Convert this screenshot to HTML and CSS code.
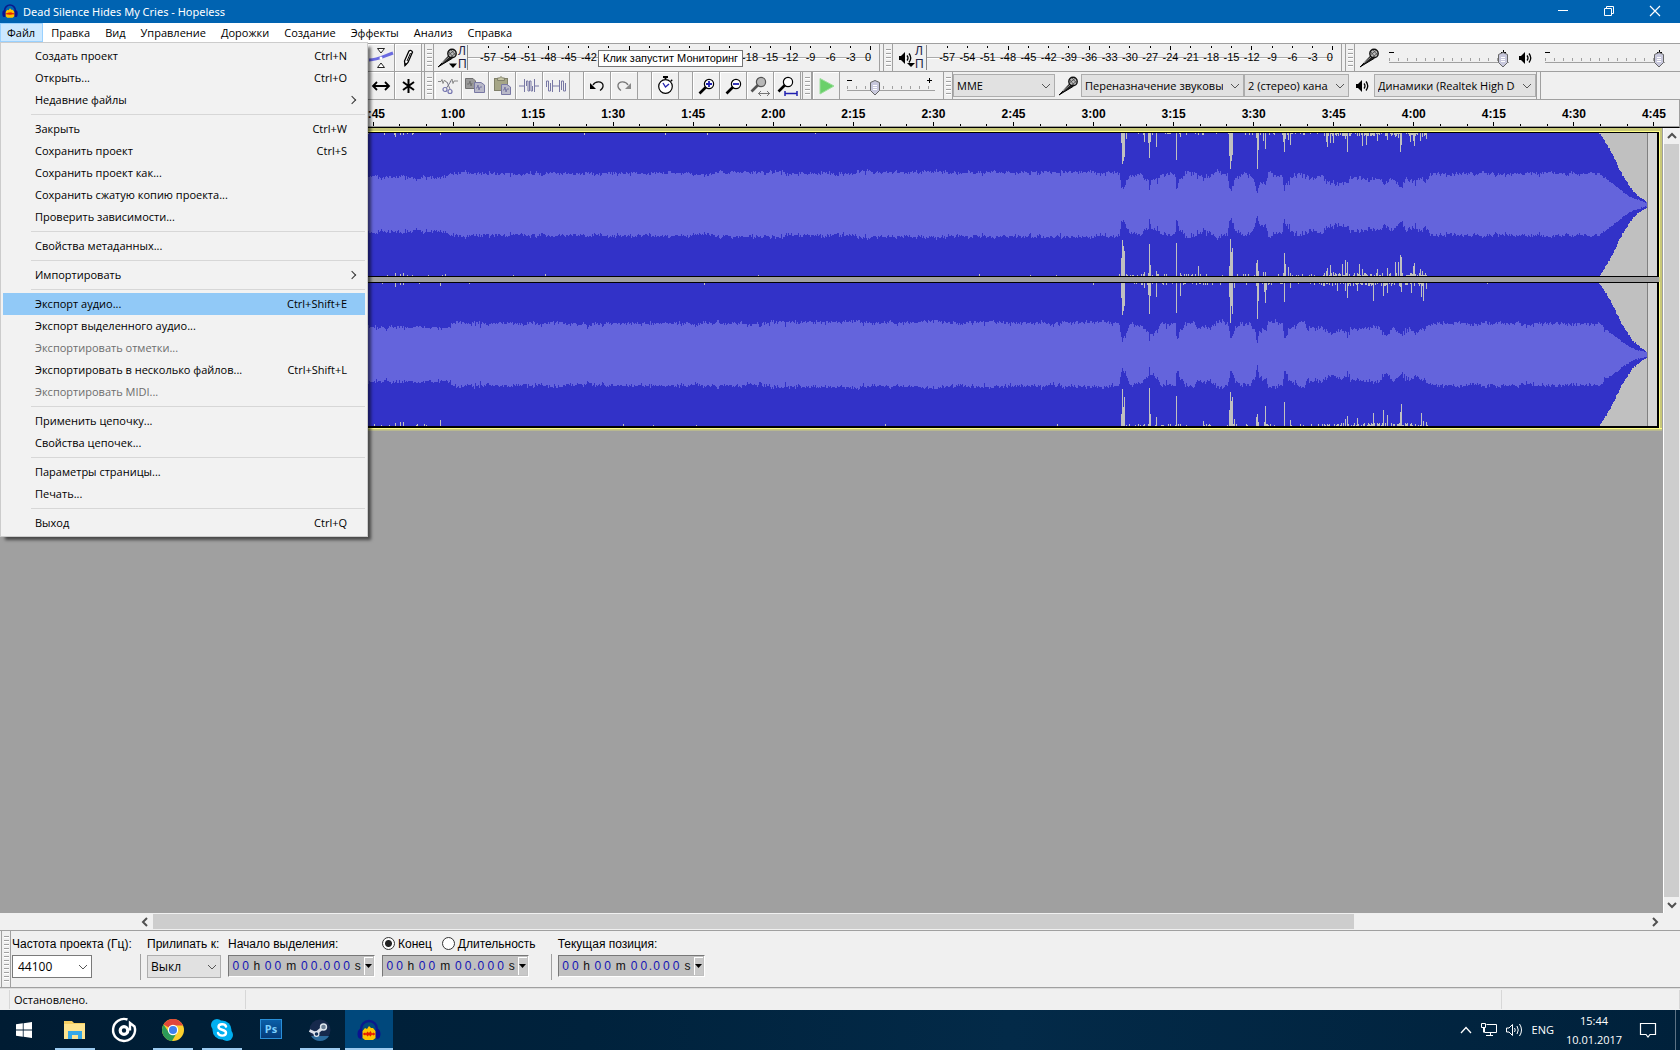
FILE: index.html
```html
<!DOCTYPE html>
<html lang="ru">
<head>
<meta charset="utf-8">
<title>Dead Silence Hides My Cries - Hopeless</title>
<link rel="stylesheet" href="styles.css">
</head>
<body>
<svg class="defs" width="0" height="0" aria-hidden="true">
  <defs>
    <symbol id="mic" viewBox="0 0 20 20">
      <path d="M1 19 L3 17 L12 7.500 L15 10.500 L5 16.500 Z" fill="#222" stroke="#000"/>
      <path d="M5 15 L12 9" stroke="#999"/>
      <circle cx="15" cy="5.500" r="4.200" fill="#bbb" stroke="#111" stroke-width="1.400"/>
      <path d="M12 4 L16 9 M14 2 L18.500 7 M12 6.500 L17 2.500 M14 9 L18.500 5" stroke="#444" stroke-width=".8"/>
    </symbol>
    <symbol id="speaker" viewBox="0 0 14 14">
      <path d="M0 5 H2 L6 1 V13 L2 9 H0 Z" fill="#000"/>
      <path d="M8 4.500 Q10 7 8 9.500 M10 2.500 Q13.500 7 10 11.500" fill="none" stroke="#000" stroke-width="1.300"/>
    </symbol>
    <symbol id="lens" viewBox="0 0 18 18">
      <path d="M8 9 L1.500 15.500" stroke="#000" stroke-width="2.600"/>
      <circle cx="11" cy="6" r="4.600" stroke="#000" stroke-width="1.200"/>
    </symbol>
    <symbol id="phones" viewBox="0 0 24 24">
      <path d="M4 14 V11 A8 8 0 0 1 20 11 V14" fill="none" stroke="#0a1a8c" stroke-width="2.400"/>
      <ellipse cx="3.500" cy="16" rx="3" ry="5" fill="#0b1290"/>
      <ellipse cx="20.500" cy="16" rx="3" ry="5" fill="#0b1290"/>
      <path d="M5.500 20 V13 L8 10 L10 11 L12 8 L14 10 L16 10 L18.500 13 V20 L16 22 H8 Z" fill="#fdc500"/>
      <path d="M5.500 16 L8 14.500 L9 15.500 L10.500 13.500 L12 15 L13.500 13 L15 15.500 L16.500 14.500 L18.500 16 L16.500 17.500 L15 16.500 L13.500 18.500 L12 17 L10.500 18.500 L9 16.500 L8 17.500 Z" fill="#e81c00"/>
    </symbol>
  </defs>
</svg>

<header class="titlebar">
  <svg class="app-icon" width="16" height="16"><use href="#phones"/></svg>
  <h1>Dead Silence Hides My Cries - Hopeless</h1>
  <button aria-label="Свернуть"><svg width="12" height="12"><path d="M1 5.500 H11" stroke="#fff"/></svg></button>
  <button aria-label="Восстановить"><svg width="12" height="12"><path d="M1.500 3.500 H8.500 V10.500 H1.500 Z M3.500 3.500 V1.500 H10.500 V8.500 H8.500" fill="none" stroke="#fff"/></svg></button>
  <button aria-label="Закрыть"><svg width="12" height="12"><path d="M1 1 L11 11 M11 1 L1 11" stroke="#fff" stroke-width="1.200"/></svg></button>
</header>

<nav class="menubar">
  <div class="menu-root">
    <button class="open">Файл</button>
    <div class="popup">
      <button>Создать проект<kbd>Ctrl+N</kbd></button>
      <button>Открыть...<kbd>Ctrl+O</kbd></button>
      <button class="sub">Недавние файлы</button>
      <hr>
      <button>Закрыть<kbd>Ctrl+W</kbd></button>
      <button>Сохранить проект<kbd>Ctrl+S</kbd></button>
      <button>Сохранить проект как...</button>
      <button>Сохранить сжатую копию проекта...</button>
      <button>Проверить зависимости...</button>
      <hr>
      <button>Свойства метаданных...</button>
      <hr>
      <button class="sub">Импортировать</button>
      <hr>
      <button class="current">Экспорт аудио...<kbd>Ctrl+Shift+E</kbd></button>
      <button>Экспорт выделенного аудио...</button>
      <button disabled>Экспортировать отметки...</button>
      <button>Экспортировать в несколько файлов...<kbd>Ctrl+Shift+L</kbd></button>
      <button disabled>Экспортировать MIDI...</button>
      <hr>
      <button>Применить цепочку...</button>
      <button>Свойства цепочек...</button>
      <hr>
      <button>Параметры страницы...</button>
      <button>Печать...</button>
      <hr>
      <button>Выход<kbd>Ctrl+Q</kbd></button>
    </div>
  </div>
  <button>Правка</button>
  <button>Вид</button>
  <button>Управление</button>
  <button>Дорожки</button>
  <button>Создание</button>
  <button>Эффекты</button>
  <button>Анализ</button>
  <button>Справка</button>
</nav>

<section class="toolbars">
  <div class="toolrow">
    <div class="tools">
      <button class="tool" aria-label="Огибающая"><svg width="24" height="24"><path d="M0 14 C9 14 13 11 24 7" fill="none" stroke="#6a6ae0" stroke-width="3"/><path d="M8.500 2.500 H15.500 L12 7 Z M8.500 21.500 H15.500 L12 17 Z" fill="#fff" stroke="#222"/><circle cx="12" cy="12" r="1.500" fill="#fff"/></svg></button>
      <button class="tool" aria-label="Рисование"><svg width="24" height="24"><path d="M9 19.500 L8.500 15 L13 5 Q15 3.500 16.500 6 L12 16.500 Z" fill="#fff" stroke="#000" stroke-width="1.300"/><path d="M11 15 L14.500 7" stroke="#000"/><path d="M8.500 20 L9 17 L11 18 Z"/></svg></button>
    </div>
    <i class="grip"></i>
    <div class="meterbar">
      <svg class="meter-icon" width="20" height="20"><use href="#mic"/><path d="M12 15.500 H20 L16 20 Z"/></svg>
      <span class="channels">Л<br>П</span>
      <div class="meter"><ol class="scale" data-covered-from="-39" data-covered-to="-21"></ol><div class="tooltip" role="tooltip">Клик запустит Мониторинг</div></div>
    </div>
    <i class="grip"></i>
    <div class="meterbar play-meter">
      <svg class="meter-icon" width="14" height="14"><use href="#speaker"/><path d="M8 12 H16 L12 16 Z"/></svg>
      <span class="channels">Л<br>П</span>
      <div class="meter"><ol class="scale"></ol></div>
    </div>
    <i class="grip"></i>
    <div class="mixer">
      <svg width="20" height="20"><use href="#mic"/></svg>
      <label class="slider full"><input type="range" value="100" aria-label="Уровень записи"></label>
      <svg width="14" height="14"><use href="#speaker"/></svg>
      <label class="slider full"><input type="range" value="100" aria-label="Уровень воспроизведения"></label>
    </div>
  </div>
  <div class="toolrow">
    <div class="tools">
      <button class="tool" aria-label="Сдвиг"><svg width="24" height="24"><path d="M4 12 H20 M8 8 L4 12 L8 16 M16 8 L20 12 L16 16" fill="none" stroke="#000" stroke-width="1.800"/></svg></button>
      <button class="tool" aria-label="Мультиинструмент"><svg width="24" height="24"><path d="M12.500 5 V19 M7 8 L18 16 M18 8 L7 16" stroke="#000" stroke-width="2"/></svg></button>
    </div>
    <i class="grip"></i>
    <div class="edits">
      <button class="tool" aria-label="Вырезать"><svg width="24" height="24"><path d="M2 7.500 H5 L6 5.500 L7 9.500 L8.500 6 L10 8 H11 M14 8 L16 5 L17 9.500 L18 7 H22" fill="none" stroke="#888"/><path d="M15 7 L10.500 14 M11 8 L14 15" stroke="#778"/><circle cx="9" cy="15.500" r="2" fill="none" stroke="#7676b0" stroke-width="1.200"/><circle cx="14" cy="17.500" r="2" fill="none" stroke="#7676b0" stroke-width="1.200"/></svg></button>
      <button class="tool" aria-label="Копировать"><svg width="24" height="24"><path d="M2.500 4.500 H10 L12.500 7 V14.500 H2.500 Z" fill="#999" stroke="#707070"/><path d="M4 10 H6 L7 7 L8 12 L9 9" fill="none" stroke="#707070"/><path d="M11.500 8.500 H18 L21.500 11 V18.500 H11.500 Z" fill="#b8b8c8" stroke="#7878a4"/><path d="M13 14 H14 L15 11 L16 16 L17 13 H19" fill="none" stroke="#7878a4"/></svg></button>
      <button class="tool" aria-label="Вставить"><svg width="24" height="24"><rect x="4.500" y="4.500" width="13" height="12" fill="#a5a587" stroke="#80806a"/><path d="M7.500 6.500 V4 H9.500 Q11 1 12.500 4 H14.500 V6.500 Z" fill="#c5c5a5" stroke="#80806a"/><path d="M11.500 10.500 H17 L20.500 13 V20.500 H11.500 Z" fill="#b8b8c8" stroke="#7878a4"/><path d="M13 16 H14 L15 13 L16 18 L17 15 H19" fill="none" stroke="#7878a4"/></svg></button>
      <button class="tool" aria-label="Обрезать"><svg width="24" height="24"><path d="M2 12 H7 M18 12 H22 M7.500 5 V18 M17.500 5 V18 M9.500 12 V7 H11 V17 H12.500 V7 H14 V17 H15.500 V12" fill="none" stroke="#7878a4"/></svg></button>
      <button class="tool" aria-label="Тишина"><svg width="24" height="24"><path d="M2.500 13 V7 H4.500 V17 H6.500 V9 M8.500 6 V18 M8.500 12 H15 M15.500 6 V18 M17.500 16 V7 H19.500 V17 H21.500 V9" fill="none" stroke="#7878a4"/></svg></button>
      <button class="tool apart" aria-label="Отменить"><svg width="24" height="24"><path d="M8 11 C10 7 17 6.500 18 11 Q18.500 14 15 16.500" fill="none" stroke="#111" stroke-width="1.300"/><path d="M5 9 V15 H11 Z"/></svg></button>
      <button class="tool" aria-label="Вернуть"><svg width="24" height="24"><path d="M16 11 C14 7 7 6.500 6 11 Q5.500 14 9 16.500" fill="none" stroke="#777" stroke-width="1.300"/><path d="M19 9 V15 H13 Z" fill="#888"/></svg></button>
      <button class="tool apart" aria-label="Синхронизация"><svg width="24" height="24"><path d="M10 3 H15 M12.500 2 V5" stroke="#000" stroke-width="1.800"/><circle cx="12.500" cy="12.500" r="6.800" fill="#fff" stroke="#000" stroke-width="1.200"/><path d="M10 9 L12.500 13 L16 10" fill="none" stroke="#2525b0" stroke-width="1.400"/><path d="M18 6 L19 7" stroke="#000" stroke-width="2"/></svg></button>
      <button class="tool apart" aria-label="Приблизить"><svg width="24" height="24"><use href="#lens" x="4" y="4" width="18" height="18" fill="#fff"/><path d="M12 10 H18 M15 7 V13" stroke="#2020b0" stroke-width="1.800"/></svg></button>
      <button class="tool" aria-label="Отдалить"><svg width="24" height="24"><use href="#lens" x="4" y="4" width="18" height="18" fill="#fff"/><path d="M12 10 H18" stroke="#2020b0" stroke-width="1.800"/></svg></button>
      <button class="tool" aria-label="Выделение в окно"><svg width="24" height="24"><use href="#lens" x="2" y="2" width="18" height="18" fill="#999" opacity=".65"/><path d="M10 19.500 H22 M13 17 L10.500 19.500 L13 22 M19 17 L21.500 19.500 L19 22" fill="none" stroke="#777"/></svg></button>
      <button class="tool" aria-label="Проект в окно"><svg width="24" height="24"><use href="#lens" x="2" y="2" width="18" height="18" fill="#fff"/><path d="M10 19.500 H22 M10 17 V22 M22 17 V22" stroke="#2020b0" stroke-width="1.500"/></svg></button>
    </div>
    <i class="grip"></i>
    <div class="speed">
      <button class="tool" aria-label="Воспроизвести"><svg width="24" height="24"><path d="M6 4.500 L20 12 L6 20 Z" fill="#6ad06a" stroke="#9ade9a"/></svg></button>
      <label class="slider"><input type="range" value="29" aria-label="Скорость"></label>
    </div>
    <i class="grip"></i>
    <div class="devices">
      <select class="host" aria-label="Аудиосистема"><option>MME</option></select>
      <svg width="20" height="20"><use href="#mic"/></svg>
      <select class="input-device" aria-label="Устройство записи"><option>Переназначение звуковых устр.</option></select>
      <select class="input-channels" aria-label="Каналы записи"><option>2 (стерео) каналы записи</option></select>
      <svg class="out" width="14" height="14"><use href="#speaker"/></svg>
      <select class="output-device" aria-label="Устройство воспроизведения"><option>Динамики (Realtek High Definition)</option></select>
    </div>
  </div>
</section>

<div class="ruler"><ol id="timeline"></ol></div>

<main class="workspace">
  <div class="tracks">
    <div class="track">
      <svg class="wave" viewBox="0 0 1657 143" preserveAspectRatio="none"></svg>
      <svg class="wave" viewBox="0 0 1657 143" preserveAspectRatio="none"></svg>
    </div>
  </div>
  <div class="vscroll">
    <button aria-label="Вверх"><svg width="10" height="8"><path d="M1 6 L5 2 L9 6" fill="none" stroke="#505050" stroke-width="2"/></svg></button>
    <i></i>
    <button aria-label="Вниз"><svg width="10" height="8"><path d="M1 2 L5 6 L9 2" fill="none" stroke="#505050" stroke-width="2"/></svg></button>
  </div>
</main>
<div class="hscroll">
  <button aria-label="Влево"><svg width="8" height="10"><path d="M6 1 L2 5 L6 9" fill="none" stroke="#505050" stroke-width="2"/></svg></button>
  <div class="rail"><i></i></div>
  <button aria-label="Вправо"><svg width="8" height="10"><path d="M2 1 L6 5 L2 9" fill="none" stroke="#505050" stroke-width="2"/></svg></button>
</div>

<section class="selection">
  <i class="grip"></i>
  <div class="field rate">
    <label for="rate">Частота проекта (Гц):</label>
    <div class="combo"><input id="rate" value="44100"><button aria-label="Список частот"><svg width="10" height="6"><path d="M1 1 L5 5 L9 1" fill="none" stroke="#555"/></svg></button></div>
  </div>
  <div class="field snap">
    <label for="snap">Прилипать к:</label>
    <select id="snap"><option>Выкл</option></select>
  </div>
  <div class="field">
    <span>Начало выделения:</span>
    <div class="time"></div>
  </div>
  <div class="field">
    <div class="radios">
      <label><input type="radio" name="end" checked>Конец</label>
      <label><input type="radio" name="end">Длительность</label>
    </div>
    <div class="time"></div>
  </div>
  <div class="field position">
    <span>Текущая позиция:</span>
    <div class="time"></div>
  </div>
</section>

<footer class="status"><span>Остановлено.</span><span></span><span></span></footer>

<nav class="taskbar">
  <button class="start" aria-label="Пуск"><svg width="16" height="16"><path d="M0 2.300 L6.800 1.300 V7.500 H0 Z M7.600 1.200 L16 0 V7.500 H7.600 Z M0 8.400 H6.800 V14.700 L0 13.700 Z M7.600 8.400 H16 V16 L7.600 14.800 Z" fill="#fff"/></svg></button>
  <button class="run" aria-label="Проводник"><svg width="24" height="24"><path d="M1 3 H9 L11 5 H22 V21 H1 Z" fill="#f5cf62"/><path d="M1 6 H22 V21 H1 Z" fill="#fde48f"/><path d="M5 21 V13 H19 V21 H15 V17 H9 V21 Z" fill="#35a8e8"/></svg></button>
  <button aria-label="Музыка"><svg width="24" height="24"><path d="M15.500 1.500 A11 11 0 1 0 22.500 8.500 L18 5 V12.500" fill="none" stroke="#fff" stroke-width="2.400"/><circle cx="12" cy="12.500" r="3.800" fill="none" stroke="#fff" stroke-width="3.200"/></svg></button>
  <button class="run" aria-label="Chrome"><svg width="24" height="24"><circle cx="12" cy="12" r="11" fill="#fbcf2d"/><path d="M12 12 L2.500 6.500 A11 11 0 0 1 21.500 6.500 L22 7.500 H12 Z" fill="#e0463a"/><path d="M2.500 6.500 A11 11 0 0 0 11 23 L16 14.500 L12 12 L8 14.500 Z" fill="#2c9b58"/><circle cx="12" cy="12" r="5.200" fill="#fff"/><circle cx="12" cy="12" r="4" fill="#3f80ee"/></svg></button>
  <button class="run" aria-label="Skype"><svg width="24" height="24"><circle cx="12" cy="12" r="9.500" fill="#00aff0"/><circle cx="7" cy="7" r="6" fill="#00aff0"/><circle cx="17" cy="17" r="6" fill="#00aff0"/><path d="M16 8.500 C15 5.500 8.500 5.500 8.500 9 C8.500 12.500 16 11 16 14.800 C16 18.500 9 18.500 8 15" fill="none" stroke="#fff" stroke-width="2.400" stroke-linecap="round"/></svg></button>
  <button aria-label="Photoshop"><span class="ps">Ps</span></button>
  <button class="run" aria-label="Steam"><svg width="24" height="24"><circle cx="12" cy="12" r="10.500" fill="#16294c"/><path d="M3 18 A10.500 10.500 0 0 0 21 18 Z" fill="#2b6a9c"/><path d="M1.500 12.500 L8 15.500 L15 9.500" fill="none" stroke="#d8dee8" stroke-width="3"/><circle cx="8.500" cy="16" r="2.400" fill="#16345c" stroke="#e0e6ee" stroke-width="1.200"/><circle cx="15.500" cy="9" r="3" fill="#6d7f96" stroke="#e0e6ee" stroke-width="1.400"/></svg></button>
  <button class="run active" aria-label="Audacity"><svg width="24" height="24"><use href="#phones"/></svg></button>
  <div class="tray">
    <svg width="12" height="8"><path d="M1 7 L6 1.500 L11 7" fill="none" stroke="#fff" stroke-width="1.300"/></svg>
    <svg width="16" height="14"><path d="M5.500 1.500 H15.500 V9.500 H3.500 V5 M9.500 10 V12.500 M5 12.500 H12 M.5 .5 H4.500 V4.500 H.5 Z M2.500 4.500 V9.500" fill="none" stroke="#fff"/></svg>
    <svg width="17" height="14"><path d="M.5 5 H3 L6.500 1.500 V12.500 L3 9 H.5 Z M8.500 5 Q10 7 8.500 9 M11 3 Q13.500 7 11 11 M13.500 1 Q17.500 7 13.500 13" fill="none" stroke="#fff"/></svg>
    <span>ENG</span>
    <time>15:44<br>10.01.2017</time>
    <svg width="16" height="16"><path d="M.5 1.500 H15.500 V12.500 H10 V12.500 L8 15 L6 12.500 H.5 Z" fill="none" stroke="#fff" stroke-width="1.200"/></svg>
  </div>
</nav>
<script src="app.js"></script>
</body>
</html>
```
FILE: styles.css
```css
* { box-sizing: border-box; }

body {
  margin: 0;
  height: 100vh;
  display: flex;
  flex-direction: column;
  background: #f0f0f0;
  color: #000;
  font: 11px/16px "Open Sans", "Noto Sans", sans-serif;
  overflow: hidden;
}

button, select, input { font: inherit; color: inherit; margin: 0; }
button { border: 0; padding: 0; background: none; }
svg { display: block; flex: none; overflow: visible; }
ol { list-style: none; margin: 0; padding: 0; }
.defs { position: absolute; }

/* title bar */
.titlebar {
  display: flex;
  align-items: center;
  height: 23px;
  flex: none;
  padding: 0 3px 2px 2px;
  background: #0063b1;
  color: #fff;
}
.titlebar h1 { flex: 1; margin: 0 0 0 5px; padding-top: 2px; font: 11px/16px "Noto Sans", sans-serif; }
.titlebar button { width: 46px; height: 20px; display: grid; place-items: center; }
.titlebar button:last-child { width: 45px; }

/* menu */
.menubar { display: flex; gap: 1px; flex: none; height: 20px; background: #fff; }
.menubar > button, .menu-root > button { height: 19px; padding: 0 7px; }
.menu-root { position: relative; }
.menu-root > .open { padding: 0 8px 0 7px; background: #cce8ff; outline: 1px solid #99d1ff; outline-offset: -1px; }
.popup {
  position: absolute;
  z-index: 5;
  left: 0;
  top: 19px;
  width: 368px;
  padding: 2px;
  border: 1px solid #ccc;
  background: #f2f2f2;
  box-shadow: 4px 4px 3px -1px rgba(0, 0, 0, .55);
}
.popup button {
  display: flex;
  align-items: center;
  width: 100%;
  height: 22px;
  padding: 0 18px 0 32px;
  text-align: left;
}
.popup kbd { margin-left: auto; font: inherit; }
.popup .current { background: #91c9f7; }
.popup button:disabled { color: #6d6d6d; }
.popup .sub::after {
  content: "";
  width: 5px;
  height: 5px;
  margin: 0 -8px 0 auto;
  border: solid #333;
  border-width: 1px 1px 0 0;
  transform: rotate(45deg);
}
.popup hr { height: 1px; margin: 3px 0 3px 28px; border: 0; background: #d7d7d7; }

/* toolbars */
.toolbars { flex: none; border-top: 1px solid #a0a0a0; }
.toolrow {
  display: flex;
  height: 28px;
  padding-left: 368px;
  border-bottom: 1px solid #a0a0a0;
}
.tools, .edits, .speed, .devices, .mixer, .meterbar { display: flex; align-items: center; }
.tool {
  width: 27px;
  height: 27px;
  display: grid;
  place-items: center;
  border: solid #a0a0a0;
  border-width: 0 1px 0 0;
  box-shadow: inset 1px 1px #fff;
}
.tools { width: 56px; }
.edits { width: 368px; padding-left: 1px; }
.tool.apart { margin-left: 14px; box-shadow: inset 1px 1px #fff, -1px 0 #a0a0a0; }
.grip {
  flex: none;
  width: 10px;
  border: solid #a0a0a0;
  border-width: 0 1px;
  background: repeating-linear-gradient(#a0a0a0 0 1px, #fff 1px 2px, transparent 2px 4px) 2px 5px / 5px 18px no-repeat;
}
.meterbar { flex: 1; padding: 0 8px 0 3px; border-right: 1px solid #a0a0a0; margin-right: 3px; gap: 1px; }
.play-meter { padding-left: 6px; gap: 2px; }
.channels { width: 8px; font: 12px/13px "Liberation Sans", sans-serif; color: #224; }
.play-meter .channels { width: 9px; }
.meter {
  position: relative;
  flex: 1;
  height: 25px;
  padding-left: 10px;
  border-left: 1px solid #888;
  background: linear-gradient(transparent 12px, #aaa 12px 13px, #fff 13px 14px, transparent 14px);
}
.scale {
  display: grid;
  grid-template-columns: repeat(19, minmax(0, 2fr)) minmax(0, 1fr);
  font: 11px/13px "Liberation Sans", sans-serif;
}
.scale li { display: flex; flex-direction: column; align-items: center; white-space: nowrap; }
.scale li::before { content: ""; width: 1px; height: 2px; margin: 1px 0 3px; background: #000; }
.scale li:nth-child(4n)::before { height: 4px; margin-bottom: 1px; }
.scale li:last-child { align-items: flex-end; }
.tooltip {
  position: absolute;
  left: 130px;
  top: 5px;
  padding: 0 4px;
  border: 1px solid #767676;
  background: #fff;
  font: 11px/15px "Liberation Sans", sans-serif;
  white-space: nowrap;
}
.mixer { flex: none; width: 325px; padding-left: 4px; gap: 10px; }
.slider {
  position: relative;
  display: block;
  width: 88px;
  height: 27px;
  background:
    linear-gradient(#000, #000) 0 8px / 5px 1px no-repeat,
    linear-gradient(#a0a0a0, #a0a0a0) 0 18px / 100% 1px no-repeat,
    repeating-linear-gradient(90deg, #a0a0a0 0 1px, transparent 1px 9px) 0 14px / 100% 3px no-repeat;
}
.slider::after {
  content: "";
  position: absolute;
  right: 3px;
  top: 6px;
  width: 5px;
  height: 5px;
  background: linear-gradient(#000, #000) 0 2px / 5px 1px no-repeat, linear-gradient(#000, #000) 2px 0 / 1px 5px no-repeat;
}
.slider.full { width: 120px; }
.slider.full + svg { margin-right: 2px; }
.slider input {
  position: relative;
  z-index: 1;
  display: block;
  width: 100%;
  height: 27px;
  appearance: none;
  background: none;
}
.slider input::-webkit-slider-thumb {
  appearance: none;
  width: 12px;
  height: 16px;
  margin-top: 4px;
  background: url("data:image/svg+xml,%3Csvg xmlns='http://www.w3.org/2000/svg' width='12' height='16'%3E%3Cpath d='M1.500 2.500 L6 .5 L10.500 2.500 V10.500 L6 15 L1.500 10.500 Z' fill='%23c8c8dc' stroke='%23666'/%3E%3Cpath d='M4 5.500 H8 M4 7.500 H8 M4 9.500 H8' stroke='%23fff'/%3E%3C/svg%3E");
}
.speed { width: 131px; padding-left: 1px; gap: 7px; }
.speed .tool { box-shadow: inset 1px 1px #fff, -1px 0 #a0a0a0; }
.devices { border-right: 1px solid #a0a0a0; box-shadow: 3px 0 #f0f0f0, 4px 0 #a0a0a0; }
select {
  appearance: none;
  height: 23px;
  padding: 0 20px 0 3px;
  border: 1px solid #adadad;
  border-radius: 0;
  background: #e1e1e1 url("data:image/svg+xml,%3Csvg xmlns='http://www.w3.org/2000/svg' width='10' height='6'%3E%3Cpath d='M1 1 L5 5 L9 1' fill='none' stroke='%23555'/%3E%3C/svg%3E") right 3px center no-repeat;
  text-overflow: clip;
}
.host { width: 102px; margin-right: 3px; }
.input-device { width: 163px; margin-left: 3px; }
.input-channels { width: 105px; }
.out { margin: 0 4px 0 7px; }
.output-device { width: 162px; }

/* time ruler */
.ruler {
  flex: none;
  height: 28px;
  padding-left: 333px;
  border-right: 1px solid #a0a0a0;
  border-bottom: 1px solid #000;
  box-shadow: inset 0 -1px #a0a0a0;
  overflow: hidden;
}
#timeline {
  display: grid;
  grid-template-columns: repeat(17, 1fr);
  margin-right: -15px;
  font: bold 12px/13px "Liberation Sans", sans-serif;
  text-align: center;
}
#timeline li { padding-top: 8px; }
#timeline div { display: grid; grid-template-columns: repeat(3, 1fr); justify-items: center; align-items: end; height: 5px; }
#timeline i { width: 1px; height: 2px; background: #000; }
#timeline i:nth-child(2) { height: 4px; }

/* tracks */
.workspace { flex: 1; display: flex; min-height: 0; }
.tracks { flex: 1; background: #a0a0a0; border-right: 1px solid #fff; }
.track {
  display: grid;
  gap: 5px;
  margin-right: 1px;
  border: solid #c8c878;
  border-width: 4px 3px 0 0;
  box-shadow: 0 1px #ff8, 0 2px #c8c878, 0 3px #b8b890, inset 0 1px #ff8;
  background: #a0a0a0;
}
.wave {
  width: 100%;
  height: 145px;
  border: solid #000;
  border-width: 1px 2px 1px 0;
  outline: 1px solid #ff8;
  background: #c0c0c0;
  clip-path: inset(-1px -1px 0 0);
}
.wave:last-child { border-bottom-width: 2px; height: 146px; clip-path: inset(0 -1px -1px 0); }
.vscroll { width: 16px; display: flex; flex-direction: column; background: #f0f0f0; }
.vscroll button { height: 16px; display: grid; place-items: center; }
.vscroll i { flex: 1; margin-right: 1px; background: #cdcdcd; }
.hscroll { flex: none; display: flex; height: 17px; padding: 1px 17px 1px 136px; }
.hscroll button { width: 17px; display: grid; place-items: center; }
.rail { flex: 1; display: grid; grid-template-columns: 37fr 9fr; }
.rail i { background: #cdcdcd; }

/* selection bar */
.selection {
  flex: none;
  display: flex;
  gap: 7px;
  height: 58px;
  padding-left: 1px;
  border-top: 1px solid #a0a0a0;
  border-bottom: 1px solid #a0a0a0;
  font: 12px/14px "Liberation Sans", sans-serif;
}
.selection .grip { background-size: 5px 46px; margin-right: -6px; }
.field { padding-top: 6px; white-space: nowrap; }
.field > label, .field > span, .radios { display: flex; height: 18px; }
.rate { width: 128px; position: relative; }
.rate::after, .position::before {
  content: "";
  position: absolute;
  right: -1px;
  bottom: 7px;
  height: 26px;
  border-right: 1px solid #a0a0a0;
}
.combo { display: flex; width: 80px; height: 23px; border: 1px solid #7a7a7a; background: #fff; }
.combo input { flex: 1; min-width: 0; padding: 0 5px; border: 0; outline: 0; background: none; font: 12px/16px "Open Sans", sans-serif; }
.combo button { width: 17px; display: grid; place-items: center; }
.snap select { width: 74px; font: 12px/16px "Open Sans", sans-serif; }
.snap { width: 74px; }
.radios { gap: 10px; }
.radios label { display: flex; gap: 3px; }
.radios input {
  appearance: none;
  width: 13px;
  height: 13px;
  border: 1px solid #333;
  border-radius: 50%;
  background: #fff;
}
.radios input:checked { background: radial-gradient(circle, #222 0 3px, #fff 4px); }
.position { position: relative; margin-left: 15px; }
.position::before { right: auto; left: -7px; }
.time {
  display: flex;
  width: 147px;
  height: 22px;
  padding: 1px 1px 1px 2px;
  border: 1px solid;
  border-color: #777 #fff #fff #777;
  background: #c0c0c0;
  line-height: 18px;
}
.time span { width: 10px; text-align: center; color: #111; }
.time .d { color: #1414b4; }
.time .unit { width: 13px; }
.time .m { width: 17px; }
.time .dot { width: 3px; }
.time button { width: 9px; margin-left: auto; display: grid; place-items: center; background: #c8c8c8; box-shadow: inset 1px 1px #fff; }

/* status bar */
.status { flex: none; display: flex; height: 22px; border-top: 1px solid #dcdcdc; padding: 1px 0 1px 9px; }
.status span { border-left: 1px solid #d7d7d7; padding: 2px 4px; width: 236px; }
.status span:nth-child(2) { flex: 1; }
.status span:last-child { width: 179px; border-right: 1px solid #d7d7d7; }

/* taskbar */
.taskbar {
  flex: none;
  display: flex;
  gap: 1px;
  height: 40px;
  background: linear-gradient(90deg, #001c33, #00223c 35%, #032a48 60%, #00213b);
  color: #fff;
}
.taskbar button { width: 48px; display: grid; place-items: center; }
.taskbar .start { width: 49px; padding-right: 1px; }
.taskbar .start + button { margin-left: 1px; }
.taskbar .run { background: linear-gradient(#9ccbf0, #9ccbf0) center bottom / 40px 2px no-repeat; }
.taskbar .active { background: linear-gradient(#9ccbf0, #9ccbf0) center bottom / 48px 2px no-repeat #00487c; }
.ps {
  width: 22px;
  height: 20px;
  margin-bottom: 3px;
  border: 1px solid #2a8fd8;
  background: linear-gradient(#0a5fa8, #043a78);
  color: #7cd0ff;
  font: bold 11px/17px "Open Sans", sans-serif;
}
.tray { display: flex; align-items: center; margin-left: auto; gap: 9px; margin-right: 4px; padding-right: 19px; border-right: 1px solid #5d7284; }
.tray time { width: 62px; text-align: center; line-height: 19px; }
.tray time + svg { margin-left: 6px; }
```
FILE: app.js
```js
const SVG = "http://www.w3.org/2000/svg";

// decibel scales, -57 .. 0; values behind an open hint keep only their ticks
for (const list of document.querySelectorAll(".scale")) {
  const { coveredFrom = 1, coveredTo = 0 } = list.dataset;
  for (let db = -57; db <= 0; db += 3) {
    const li = document.createElement("li");
    if (db < Number(coveredFrom) || db > Number(coveredTo)) li.textContent = db;
    list.append(li);
  }
}

// time ruler, every 15 seconds
for (let s = 45; s <= 285; s += 15) {
  const li = document.createElement("li");
  li.textContent = Math.floor(s / 60) + ":" + String(s % 60).padStart(2, "0");
  const ticks = document.createElement("div");
  ticks.innerHTML = "<i></i><i></i><i></i>";
  li.append(ticks);
  document.getElementById("timeline").append(li);
}

// time fields
for (const field of document.querySelectorAll(".time")) {
  for (const c of "00h00m00.000s") {
    const span = document.createElement("span");
    span.textContent = c;
    span.className = c === "0" ? "d" : c === "." ? "d dot" : c === "m" ? "unit m" : "unit";
    field.append(span);
  }
  const b = document.createElement("button");
  b.setAttribute("aria-label", "Формат");
  b.innerHTML = '<svg width="7" height="4"><path d="M0 0 H7 L3.500 4 Z"/></svg>';
  field.append(b);
}

// waveforms
const MID = 71.5;
const END = 1647;
const rms = [[130, 28], [440, 27], [446, 28], [455, 31], [1000, 32], [1119, 32], [1121, 17], [1123, 15], [1126, 25], [1130, 30], [1141, 31],
  [1144, 26], [1148, 25], [1149, 15], [1151, 22], [1157, 23], [1160, 31], [1175, 30], [1176, 15], [1179, 24], [1183, 25], [1185, 30], [1195, 31], [1197, 26],
  [1211, 27], [1214, 33], [1227, 31], [1230, 14], [1233, 18], [1235, 26], [1242, 31], [1249, 31], [1254, 26], [1257, 13], [1259, 22], [1266, 24],
  [1268, 30], [1282, 30], [1284, 15], [1287, 23], [1293, 30], [1303, 31], [1305, 27], [1322, 27], [1328, 22], [1346, 22], [1347, 18], [1350, 28], [1363, 26],
  [1378, 27], [1385, 21], [1393, 26], [1401, 18], [1405, 25], [1415, 21], [1420, 25], [1427, 26], [1430, 30], [1440, 31], [1599, 31], [1603, 28],
  [1613, 20], [1623, 12], [1633, 6], [1640, 4], [1647, 2]];
const peak = [[130, 80], [1597, 80], [1599, 71], [1607, 59], [1612, 50], [1620, 33], [1625, 25], [1633, 13], [1640, 7], [1645, 4], [1647, 2]];
// x, gap at the top, gap at the bottom
const gaps = [
  [[395, 4, 3], [400, 2, 2], [403, 2, 3], [412, 2, 1], [1121, 10, 18], [1122, 31, 36], [1123, 28, 30], [1124, 24, 25], [1126, 6, 2], [1144, 9, 4], [1148, 10, 3], [1149, 25, 32], [1150, 9, 11], [1156, 14, 5],
    [1176, 27, 33], [1180, 4, 3], [1198, 2, 10], [1229, 23, 10], [1230, 36, 37], [1231, 28, 24], [1232, 22, 28], [1256, 5, 13], [1257, 36, 16], [1258, 17, 5],
    [1263, 8, 4], [1265, 16, 4], [1283, 9, 3], [1284, 19, 23], [1285, 6, 12], [1288, 7, 9], [1290, 12, 3], [1326, 9, 5], [1327, 14, 8], [1330, 10, 11], [1333, 10, 4], [1342, 3, 12],
    [1345, 6, 16], [1347, 19, 14], [1359, 3, 12], [1362, 13, 7], [1366, 12, 2], [1377, 8, 7], [1387, 7, 8], [1395, 4, 14], [1398, 5, 14],
    [1400, 19, 21], [1401, 12, 19], [1410, 9, 3], [1413, 8, 10], [1414, 13, 13], [1420, 8, 7], [1422, 4, 5], [1426, 6, 1]],
  [[395, 4, 3], [400, 2, 4], [403, 2, 4], [440, 3, 6], [1121, 15, 12], [1122, 32, 37], [1123, 28, 19], [1124, 23, 29], [1144, 5, 2], [1148, 12, 2], [1149, 31, 38], [1150, 13, 12],
    [1156, 14, 9], [1176, 30, 30], [1180, 13, 2], [1203, 2, 5], [1229, 14, 16], [1230, 40, 34], [1231, 23, 25], [1232, 31, 29], [1234, 5, 7], [1256, 3, 9], [1257, 36, 12],
    [1258, 18, 4], [1264, 9, 4], [1265, 20, 20], [1266, 7, 2], [1284, 19, 24], [1290, 5, 6], [1337, 8, 2], [1345, 8, 7], [1347, 15, 10], [1357, 8, 8],
    [1373, 18, 13], [1383, 13, 16], [1387, 10, 11], [1400, 4, 14], [1401, 9, 22], [1411, 10, 3], [1421, 14, 13], [1423, 18, 5], [1426, 6, 4]]
];

function at(points, x) {
  let i = 1;
  while (i < points.length - 1 && points[i][0] < x) i++;
  const [x0, y0] = points[i - 1], [x1, y1] = points[i];
  return y0 + (y1 - y0) * (x - x0) / (x1 - x0);
}

function add(svg, fill, d) {
  const p = document.createElementNS(SVG, "path");
  p.setAttribute("d", d);
  p.setAttribute("fill", fill);
  p.setAttribute("shape-rendering", "crispEdges");
  svg.append(p);
}

document.querySelectorAll(".wave").forEach((svg, n) => {
  let seed = 7 + n * 31;
  const rand = () => (seed = (seed * 16807) % 2147483647) / 2147483647;
  const gapAt = new Map(gaps[n].map(g => [g[0], g]));
  const bar = (x, up, down) => `M${x} ${Math.round(MID - up)}h1V${Math.round(MID + down)}h-1z`;
  let outer = "", inner = "", drift = 0;
  for (let x = 130; x < END; x++) {
    let p = at(peak, x);
    if (x > 1599 && x < 1640) p += rand() * 2 - 1;
    let up = Math.min(MID, p), down = up;
    const dense = (x > 1320 && x < 1428);
    const odds = dense ? 0.6 : x < 450 ? 0.12 : (x > 1120 && x < 1320) ? 0.25 : 0.008;
    const depth = dense ? 3.5 : 2;
    if (x < 1598) {
      if (rand() < odds) up -= rand() * depth;
      if (rand() < odds) down -= rand() * depth;
    }
    const g = gapAt.get(x);
    if (g) { up = MID - g[1]; down = MID - g[2]; }
    const size = x > 1605 ? 0.6 : x > 1120 && x < 1430 ? 3 : 2.2;
    drift = drift * 0.8 + (rand() - 0.5) * size * 0.8;
    const r = at(rms, x);
    const j = drift + (rand() + rand() - 1) * size - (rand() < 0.06 ? size : 0);
    outer += bar(x, up, down);
    inner += bar(x, r + j, r + j + (rand() - 0.5) * 0.8);
  }
  add(svg, "#3232c8", outer);
  add(svg, "#6464dc", inner);
  add(svg, "#808080", `M${END} 0h1v143h-1z`);
  add(svg, "#d6d6d6", `M${END + 1} 0h9v143h-9z`);
});
```
